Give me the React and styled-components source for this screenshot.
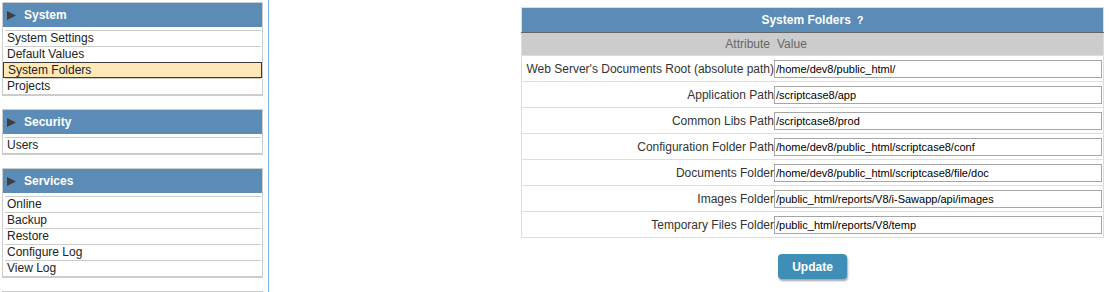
import React from "react";
import styled, { createGlobalStyle } from "styled-components";

const GlobalStyle = createGlobalStyle`
  html, body {
    margin: 0;
    padding: 0;
    background: #ffffff;
    font-family: "Liberation Sans", Arial, sans-serif;
  }
  body { overflow: hidden; }
`;

const Page = styled.div`
  display: flex;
  height: 292px;
  overflow: hidden;
`;

const Sidebar = styled.aside`
  width: 269px;
  flex-shrink: 0;
  box-sizing: border-box;
  border-right: 1px solid #7db6e3;
  padding: 2px 0 0 2px;
`;

const Panel = styled.section`
  width: 261px;
  box-sizing: border-box;
  border: 1px solid #cccccc;
  margin-bottom: 13px;
`;

const PanelHeader = styled.div`
  height: 24px;
  background: #5a8cb7;
  display: flex;
  align-items: center;
  gap: 8px;
  padding-left: 4px;
  margin-bottom: 3px;
  color: #ffffff;
  font-weight: bold;
  font-size: 12px;
`;

const Arrow = styled.svg`
  width: 9px;
  height: 9px;
  display: block;
`;

const ItemList = styled.ul`
  list-style: none;
  margin: 0;
  padding: 0;
  border-bottom: 1px solid #cccccc;
`;

const Item = styled.li`
  box-sizing: border-box;
  height: 16px;
  display: flex;
  align-items: center;
  padding-bottom: 1px;
  font-size: 12px;
  color: #222222;
  ${({ $active }) =>
    $active
      ? `
    margin: 0;
    border: 1px solid #3a3a3a;
    background: #fee8b7;
    padding-left: 4px;
  `
      : `
    margin: 0 1px 0 2px;
    border-top: 1px solid #cccccc;
    padding-left: 2px;
  `}
`;

const Main = styled.main`
  flex: 1;
  padding: 7px 0 0 252px;
`;

const Column = styled.div`
  width: 583px;
  display: flex;
  flex-direction: column;
  align-items: center;
`;

const Table = styled.table`
  width: 583px;
  border-collapse: collapse;
  border: 1px solid #dddddd;
  font-size: 12px;
`;

const TitleCell = styled.th`
  height: 24px;
  padding: 0;
  background: #5a8cb7;
  color: #ffffff;
  font-weight: bold;
  font-size: 12px;
  text-align: center;
  border-bottom: 1px solid #666666;
`;

const Help = styled.span`
  font-size: 11px;
  margin-left: 6px;
`;

const HeadCell = styled.th`
  height: 22px;
  padding: ${({ $align }) => ($align === "right" ? "0 4px 0 0" : "0 0 0 3px")};
  background: #cccccc;
  color: #666666;
  font-weight: normal;
  font-size: 12px;
  text-align: ${({ $align }) => $align};
`;

const Row = styled.tr`
  border-top: 1px solid #dddddd;
`;

const LabelCell = styled.td`
  width: 251px;
  height: 25px;
  padding: 0 0 0 1px;
  text-align: right;
  white-space: nowrap;
  color: #333333;
  font-size: 12px;
`;

const ValueCell = styled.td`
  padding: 0 1px 0 0;
`;

const PathInput = styled.input`
  display: block;
  width: 100%;
  box-sizing: border-box;
  height: 18px;
  margin: 0;
  padding: 0 1px;
  border: 1px solid #a6a6a6;
  font-family: "Liberation Sans", Arial, sans-serif;
  font-size: 11px;
  color: #000000;
  background: #ffffff;
  outline: none;
`;

const UpdateButton = styled.button`
  margin-top: 16px;
  width: 69px;
  height: 25px;
  border: none;
  border-radius: 4px;
  background: #3e8eb8;
  color: #ffffff;
  font-family: "Liberation Sans", Arial, sans-serif;
  font-weight: bold;
  font-size: 12px;
  box-shadow: 1px 2px 2px rgba(0, 0, 0, 0.35);
  cursor: pointer;
`;

const menus = [
  {
    title: "System",
    items: ["System Settings", "Default Values", "System Folders", "Projects"],
    active: "System Folders",
  },
  { title: "Security", items: ["Users"] },
  {
    title: "Services",
    items: ["Online", "Backup", "Restore", "Configure Log", "View Log"],
  },
];

const folders = [
  ["Web Server's Documents Root (absolute path)", "/home/dev8/public_html/"],
  ["Application Path", "/scriptcase8/app"],
  ["Common Libs Path", "/scriptcase8/prod"],
  ["Configuration Folder Path", "/home/dev8/public_html/scriptcase8/conf"],
  ["Documents Folder", "/home/dev8/public_html/scriptcase8/file/doc"],
  ["Images Folder", "/public_html/reports/V8/i-Sawapp/api/images"],
  ["Temporary Files Folder", "/public_html/reports/V8/temp"],
];

export default function App() {
  return (
    <>
      <GlobalStyle />
      <Page>
        <Sidebar>
          {menus.map((m) => (
            <Panel key={m.title}>
              <PanelHeader>
                <Arrow viewBox="0 0 9 9">
                  <polygon points="0,0 9,4.5 0,9" fill="#404040" />
                </Arrow>
                {m.title}
              </PanelHeader>
              <ItemList>
                {m.items.map((it) => (
                  <Item key={it} $active={it === m.active}>
                    {it}
                  </Item>
                ))}
              </ItemList>
            </Panel>
          ))}
          <Panel />
        </Sidebar>
        <Main>
          <Column>
            <Table>
              <thead>
                <tr>
                  <TitleCell colSpan={2}>
                    System Folders<Help>?</Help>
                  </TitleCell>
                </tr>
                <tr>
                  <HeadCell $align="right">Attribute</HeadCell>
                  <HeadCell $align="left">Value</HeadCell>
                </tr>
              </thead>
              <tbody>
                {folders.map(([label, value]) => (
                  <Row key={label}>
                    <LabelCell>{label}</LabelCell>
                    <ValueCell>
                      <PathInput defaultValue={value} />
                    </ValueCell>
                  </Row>
                ))}
              </tbody>
            </Table>
            <UpdateButton>Update</UpdateButton>
          </Column>
        </Main>
      </Page>
    </>
  );
}
